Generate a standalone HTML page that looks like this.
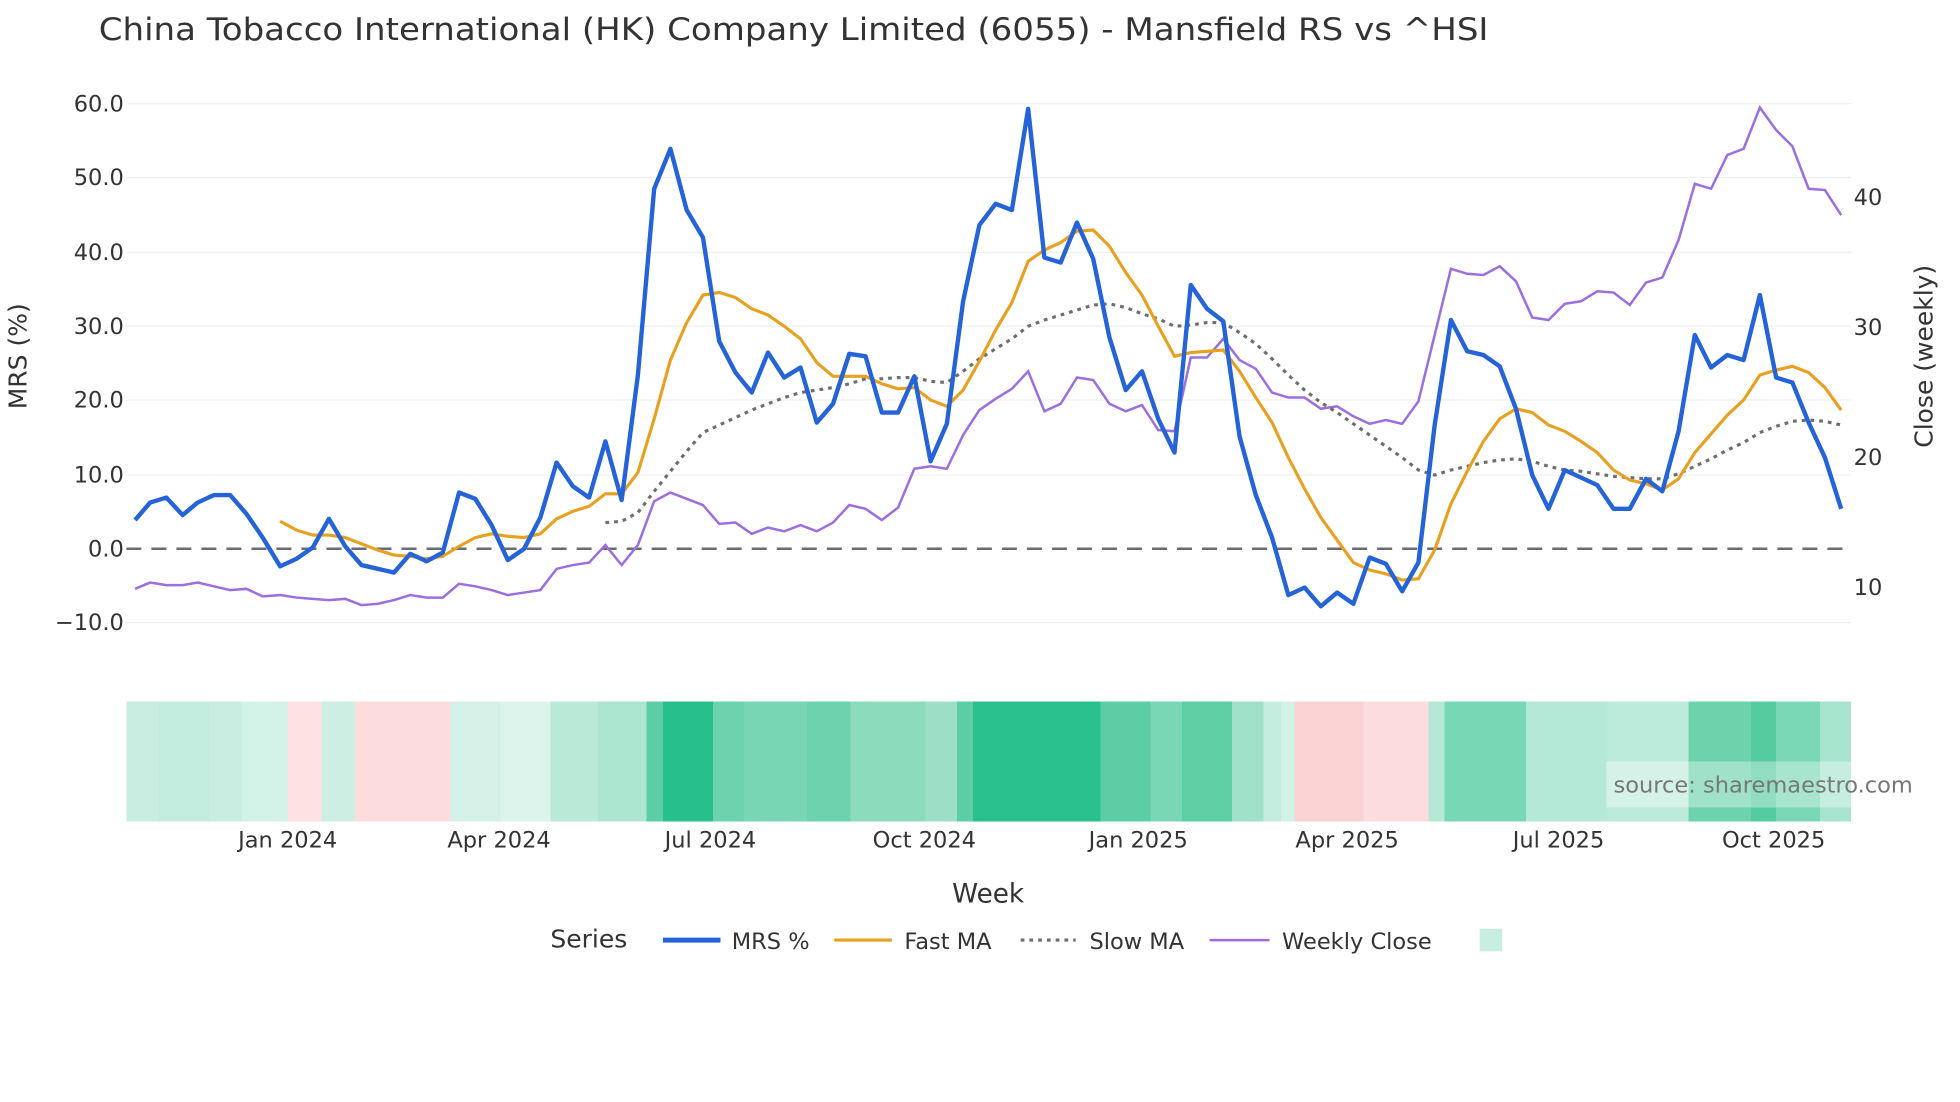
<!DOCTYPE html>
<html><head><meta charset="utf-8"><style>html,body{margin:0;padding:0;background:#fff;width:1960px;height:1102px;overflow:hidden}svg{display:block}text{font-family:"DejaVu Sans","Liberation Sans",sans-serif;fill:#2a3f5f}</style></head><body>
<svg width="1960" height="1102" viewBox="0 0 1567 881.5" preserveAspectRatio="none" xmlns="http://www.w3.org/2000/svg">
<rect width="1570" height="885" fill="#fff"/>
<text x="79" y="32" font-size="25" fill="#333" style="fill:#333" textLength="1111" lengthAdjust="spacingAndGlyphs">China Tobacco International (HK) Company Limited (6055) - Mansfield RS vs ^HSI</text>
<g stroke="#edf0f5" stroke-width="1">
<line x1="101" x2="1480" y1="83" y2="83"/><line x1="101" x2="1480" y1="142" y2="142"/><line x1="101" x2="1480" y1="202" y2="202"/><line x1="101" x2="1480" y1="261" y2="261"/><line x1="101" x2="1480" y1="320" y2="320"/><line x1="101" x2="1480" y1="380" y2="380"/><line x1="101" x2="1480" y1="498" y2="498"/>
</g>
<g font-size="18" text-anchor="end" style="fill:#333">
<text x="99" y="89" style="fill:#333">60.0</text><text x="99" y="148" style="fill:#333">50.0</text><text x="99" y="208" style="fill:#333">40.0</text><text x="99" y="267" style="fill:#333">30.0</text><text x="99" y="326" style="fill:#333">20.0</text><text x="99" y="386" style="fill:#333">10.0</text><text x="99" y="445" style="fill:#333">0.0</text><text x="99" y="504" style="fill:#333">−10.0</text>
</g>
<g font-size="18" style="fill:#333">
<text x="1482" y="164" style="fill:#333">40</text><text x="1482" y="268" style="fill:#333">30</text><text x="1482" y="372" style="fill:#333">20</text><text x="1482" y="476" style="fill:#333">10</text>
</g>
<text transform="translate(21,285) rotate(-90)" font-size="20" text-anchor="middle" style="fill:#333">MRS (%)</text>
<text transform="translate(1545,285) rotate(-90)" font-size="20" text-anchor="middle" style="fill:#333">Close (weekly)</text>
<line x1="101" x2="1480" y1="439" y2="439" stroke="#6b6b78" stroke-width="2" stroke-dasharray="12,8"/>
<polyline fill="none" stroke="#9b6fe0" stroke-width="2" points="108,471 120,466 133,468 146,468 158,466 171,469 184,472 197,471 210,477 224,476 237,478 250,479 263,480 276,479 289,484 302,483 315,480 328,476 341,478 354,478 367,467 380,469 393,472 406,476 419,474 432,472 445,455 458,452 471,450 484,436 497,452 510,436 523,401 536,394 549,399 562,404 575,419 588,418 601,427 614,422 627,425 640,420 653,425 666,418 679,404 692,407 705,416 718,406 731,375 744,373 757,375 770,348 783,328 796,319 809,311 822,297 835,329 848,323 861,302 874,304 887,323 900,329 913,324 926,344 939,345 952,286 965,286 978,271 991,288 1004,295 1017,314 1030,318 1043,318 1056,327 1069,325 1082,333 1095,339 1108,336 1121,339 1134,321 1147,268 1160,215 1173,219 1186,220 1199,213 1212,225 1225,254 1238,256 1251,243 1264,241 1277,233 1290,234 1303,244 1316,226 1329,222 1342,192 1355,147 1368,151 1381,124 1394,119 1407,86 1420,104 1433,117 1446,151 1459,152 1472,172"/>
<polyline fill="none" stroke="#6e6e6e" stroke-width="2.5" stroke-dasharray="3,4" points="484,418 497,417 510,410 523,393 536,377 549,361 562,346 575,340 588,334 601,328 614,323 627,318 640,314 653,312 666,310 679,307 692,303 705,303 718,302 731,302 744,305 757,306 770,297 783,287 796,279 809,271 822,261 835,256 848,252 861,248 874,244 887,243 900,246 913,251 926,255 939,261 952,260 965,258 978,258 991,266 1004,275 1017,287 1030,300 1043,312 1056,322 1069,330 1082,339 1095,348 1108,357 1121,366 1134,376 1147,380 1160,376 1173,373 1186,370 1199,368 1212,367 1225,369 1238,373 1251,376 1264,377 1277,379 1290,381 1303,382 1316,383 1329,383 1342,379 1355,373 1368,367 1381,360 1394,354 1407,346 1420,341 1433,337 1446,336 1459,337 1472,340"/>
<polyline fill="none" stroke="#e8a020" stroke-width="2.5" points="224,417 237,424 250,428 263,428 276,430 289,435 302,440 315,444 328,445 341,447 354,445 367,437 380,430 393,427 406,429 419,430 432,427 445,415 458,409 471,405 484,395 497,395 510,378 523,335 536,288 549,258 562,236 575,234 588,238 601,247 614,252 627,261 640,271 653,290 666,301 679,301 692,301 705,307 718,311 731,310 744,320 757,325 770,312 783,289 796,264 809,242 822,209 835,200 848,194 861,185 874,184 887,197 900,218 913,236 926,261 939,285 952,282 965,281 978,280 991,297 1004,318 1017,338 1030,366 1043,391 1056,414 1069,432 1082,450 1095,456 1108,459 1121,464 1134,463 1147,440 1160,403 1173,377 1186,353 1199,335 1212,327 1225,330 1238,340 1251,345 1264,353 1277,362 1290,376 1303,384 1316,387 1329,392 1342,383 1355,362 1368,347 1381,332 1394,320 1407,300 1420,296 1433,293 1446,298 1459,310 1472,328"/>
<polyline fill="none" stroke="#2563d9" stroke-width="3.5" stroke-linejoin="round" points="108,416 120,402 133,398 146,412 158,402 171,396 184,396 197,411 210,430 224,453 237,447 250,438 263,415 276,437 289,452 302,455 315,458 328,443 341,449 354,442 367,394 380,399 393,420 406,448 419,439 432,414 445,370 458,389 471,398 484,353 497,400 510,300 523,151 536,119 549,168 562,190 575,273 588,298 601,314 614,282 627,302 640,294 653,338 666,323 679,283 692,285 705,330 718,330 731,301 744,369 757,339 770,241 783,180 796,163 809,168 822,87 835,206 848,210 861,178 874,207 887,270 900,312 913,297 926,335 939,362 952,228 965,247 978,257 991,349 1004,396 1017,430 1030,476 1043,470 1056,485 1069,474 1082,483 1095,446 1108,451 1121,473 1134,450 1147,340 1160,256 1173,281 1186,284 1199,293 1212,327 1225,380 1238,407 1251,376 1264,382 1277,388 1290,407 1303,407 1316,383 1329,393 1342,345 1355,268 1368,294 1381,284 1394,288 1407,236 1420,302 1433,306 1446,338 1459,366 1472,407"/>
<g shape-rendering="crispEdges">
<rect x="101" y="561" width="129" height="96" fill="#c8eee1"/>
<rect x="127" y="561" width="40" height="96" fill="#c2ecdd"/>
<rect x="193" y="561" width="37" height="96" fill="#d2f1e7"/>
<rect x="230" y="561" width="27" height="96" fill="#fde1e3"/>
<rect x="257" y="561" width="27" height="96" fill="#cdefe3"/>
<rect x="284" y="561" width="76" height="96" fill="#fcdcdd"/>
<rect x="360" y="561" width="80" height="96" fill="#d3f1e6"/>
<rect x="400" y="561" width="40" height="96" fill="#dcf4eb"/>
<rect x="440" y="561" width="77" height="96" fill="#b8ead7"/>
<rect x="478" y="561" width="39" height="96" fill="#ace6d0"/>
<rect x="517" y="561" width="13" height="96" fill="#5ccda4"/>
<rect x="530" y="561" width="40" height="96" fill="#27c08d"/>
<rect x="570" y="561" width="110" height="96" fill="#6dd3ae"/>
<rect x="595" y="561" width="50" height="96" fill="#78d6b4"/>
<rect x="680" y="561" width="85" height="96" fill="#8adcbd"/>
<rect x="740" y="561" width="25" height="96" fill="#9be0c6"/>
<rect x="765" y="561" width="13" height="96" fill="#5ccda4"/>
<rect x="778" y="561" width="102" height="96" fill="#2ac18e"/>
<rect x="880" y="561" width="65" height="96" fill="#5dcda5"/>
<rect x="920" y="561" width="25" height="96" fill="#7ad7b5"/>
<rect x="945" y="561" width="40" height="96" fill="#5ecea5"/>
<rect x="985" y="561" width="25" height="96" fill="#a0e2c9"/>
<rect x="1010" y="561" width="25" height="96" fill="#c4eddf"/>
<rect x="1024" y="561" width="11" height="96" fill="#d3f2e7"/>
<rect x="1035" y="561" width="55" height="96" fill="#fad2d4"/>
<rect x="1090" y="561" width="52" height="96" fill="#fcdcdd"/>
<rect x="1142" y="561" width="13" height="96" fill="#b5e9d6"/>
<rect x="1155" y="561" width="65" height="96" fill="#78d7b4"/>
<rect x="1220" y="561" width="65" height="96" fill="#b3e9d6"/>
<rect x="1285" y="561" width="65" height="96" fill="#bdebdb"/>
<rect x="1350" y="561" width="50" height="96" fill="#6cd3ad"/>
<rect x="1400" y="561" width="20" height="96" fill="#55cba0"/>
<rect x="1420" y="561" width="35" height="96" fill="#7ad8b6"/>
<rect x="1455" y="561" width="25" height="96" fill="#a8e5cf"/>
<rect x="1284" y="609" width="196" height="37" fill="#fff" fill-opacity="0.35"/>
</g>
<text x="1290" y="634" font-size="18" style="fill:#777">source: sharemaestro.com</text>
<g font-size="18" text-anchor="middle" style="fill:#333">
<text x="230" y="678" style="fill:#333">Jan 2024</text><text x="399" y="678" style="fill:#333">Apr 2024</text><text x="568" y="678" style="fill:#333">Jul 2024</text><text x="739" y="678" style="fill:#333">Oct 2024</text><text x="910" y="678" style="fill:#333">Jan 2025</text><text x="1077" y="678" style="fill:#333">Apr 2025</text><text x="1246" y="678" style="fill:#333">Jul 2025</text><text x="1418" y="678" style="fill:#333">Oct 2025</text>
</g>
<text x="790" y="722" font-size="21" text-anchor="middle" style="fill:#333">Week</text>
<text x="440" y="758" font-size="20" style="fill:#333">Series</text>
<line x1="530" x2="576" y1="752" y2="752" stroke="#2563d9" stroke-width="4"/>
<text x="585" y="759" font-size="18" style="fill:#333">MRS %</text>
<line x1="667" x2="713" y1="752" y2="752" stroke="#e8a020" stroke-width="2.5"/>
<text x="723" y="759" font-size="18" style="fill:#333">Fast MA</text>
<line x1="816" x2="860" y1="752" y2="752" stroke="#6e6e6e" stroke-width="2.5" stroke-dasharray="3,4"/>
<text x="871" y="759" font-size="18" style="fill:#333">Slow MA</text>
<line x1="967" x2="1015" y1="752" y2="752" stroke="#9b6fe0" stroke-width="2"/>
<text x="1025" y="759" font-size="18" style="fill:#333">Weekly Close</text>
<rect x="1183" y="743" width="18" height="18" fill="#c8eee1"/>
</svg>
</body></html>
